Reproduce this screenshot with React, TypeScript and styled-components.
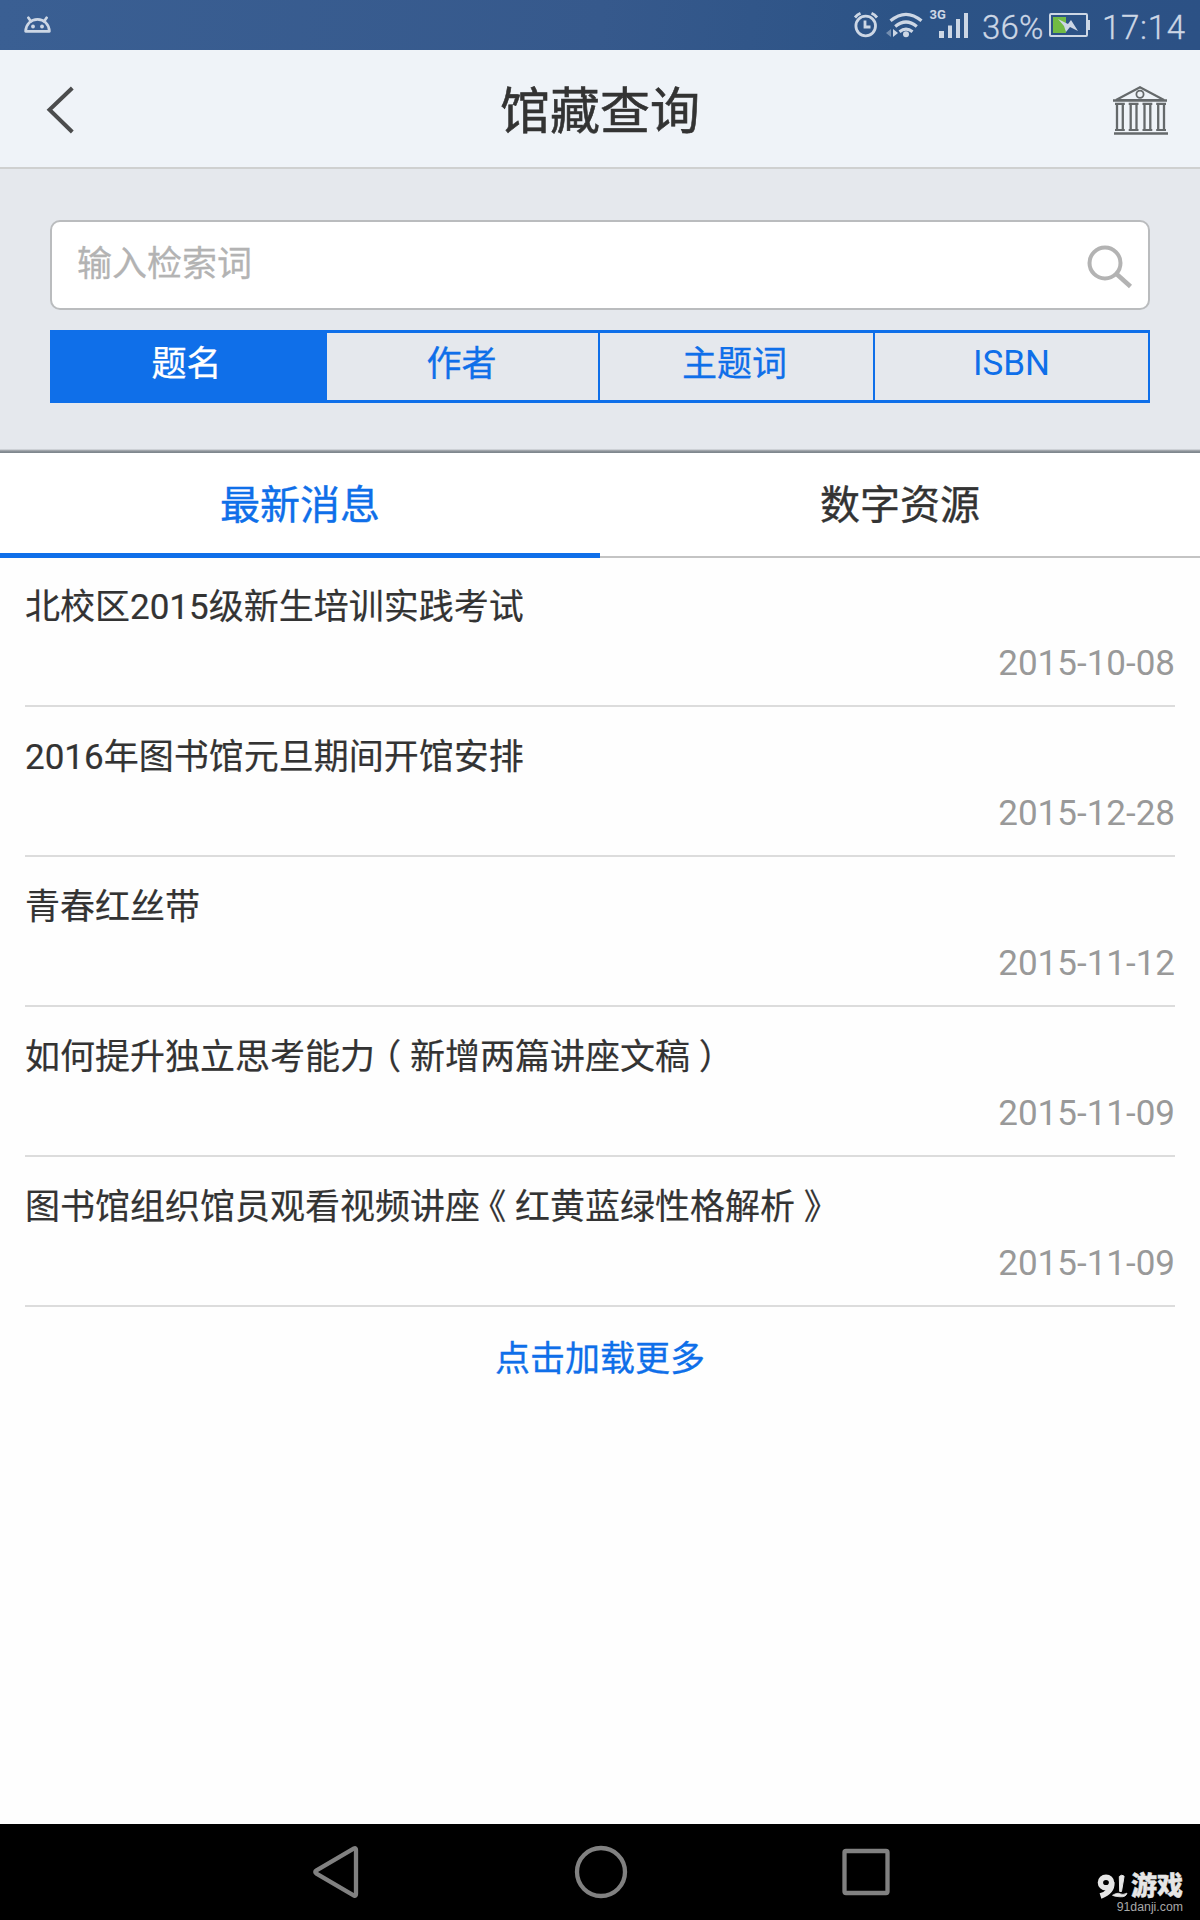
import React, { useState } from "react";
import styled, { createGlobalStyle } from "styled-components";

const BLUE = "#0f6fe9";

const GlobalStyle = createGlobalStyle`
  * { box-sizing: border-box; }
  body {
    margin: 0;
    background: #fefefe;
    font-family: Roboto, "Noto Sans CJK SC", sans-serif;
  }
  button { font: inherit; border: 0; padding: 0; margin: 0; background: none; cursor: pointer; }
`;

const Screen = styled.div`
  width: 1200px;
  height: 1920px;
  display: flex;
  flex-direction: column;
  overflow: hidden;
  color: #333;
`;

const StatusBar = styled.div`
  height: 50px;
  flex: none;
  display: flex;
  align-items: flex-start;
  padding: 0 14px 0 24px;
  background: linear-gradient(97deg, #3a5f93 0%, #36598c 50%, #2c5386 75%, #2c5185 100%);
  color: #cdd7e5;
`;

const StatusGroup = styled.div`
  margin-left: auto;
  display: flex;
`;

const StatusText = styled.span<{ $width: number; $left?: number; $spacing: number }>`
  width: ${(p) => p.$width}px;
  margin-left: ${(p) => p.$left ?? 0}px;
  padding-top: 2px;
  line-height: 52px;
  font-size: 33px;
  font-weight: 300;
  letter-spacing: ${(p) => p.$spacing}px;
  -webkit-text-stroke: 0.3px currentColor;
  white-space: nowrap;
`;

const Header = styled.header`
  height: 119px;
  flex: none;
  display: grid;
  grid-template-columns: 200px 1fr 200px;
  align-items: center;
  background: #eff3f8;
  border-bottom: 2px solid #cfd0d0;
`;

const Title = styled.h1`
  margin: 7px 0 0;
  text-align: center;
  font-size: 50px;
  line-height: 60px;
  font-weight: 400;
  -webkit-text-stroke: 0.6px currentColor;
`;

const HeaderButton = styled.button<{ $end?: boolean }>`
  display: flex;
  justify-content: ${(p) => (p.$end ? "flex-end" : "flex-start")};
  padding: ${(p) => (p.$end ? "1px 32px 0 0" : "0 0 0 46px")};
`;

const SearchPanel = styled.section`
  height: 284px;
  flex: none;
  padding: 51px 50px 0;
  background: linear-gradient(#e5e8ed 280px, #b5b9be 281px, #8e949a 282px, #7b838a 284px);
`;

const SearchBox = styled.label`
  height: 90px;
  display: flex;
  align-items: center;
  padding: 0 15px 2px 25px;
  border: 2px solid #babcbe;
  border-radius: 10px;
  background: #fff;
`;

const SearchInput = styled.input`
  flex: 1;
  min-width: 0;
  height: 60px;
  padding: 0;
  border: 0;
  outline: 0;
  background: none;
  font: inherit;
  font-size: 35px;
  color: #333;
  &::placeholder { color: #b3b3b3; opacity: 1; -webkit-text-stroke: 0.3px #b3b3b3; }
`;

const Segments = styled.div`
  margin-top: 20px;
  height: 73px;
  display: grid;
  grid-template-columns: 275px 275px 275px 275px;
  border: solid ${BLUE};
  border-width: 3px 0;
`;

const Segment = styled.button<{ $active: boolean; $latin: boolean }>`
  height: 67px;
  padding-bottom: ${(p) => (p.$latin ? 7 : 13)}px;
  border-right: 2px solid ${BLUE};
  font-size: 35px;
  color: ${(p) => (p.$active ? "#fff" : BLUE)};
  background: ${(p) => (p.$active ? BLUE : "none")};
  box-shadow: ${(p) => (p.$active ? `2px 0 ${BLUE}` : "none")};
  -webkit-text-stroke: ${(p) => (p.$latin ? 0 : 0.3)}px currentColor;
  &:nth-child(3) { padding-right: 4px; }
`;

const Tabs = styled.div`
  height: 105px;
  flex: none;
  display: grid;
  grid-template-columns: 1fr 1fr;
  background: #fff;
`;

const Tab = styled.button<{ $active: boolean }>`
  display: flex;
  justify-content: center;
  height: 105px;
  padding-top: 24px;
  line-height: 58px;
  font-size: 40px;
  color: ${(p) => (p.$active ? BLUE : "#333")};
  -webkit-text-stroke: 0.4px currentColor;
  box-shadow: inset 0 ${(p) => (p.$active ? `-5px ${BLUE}` : "-2px #c4c4c4")};
`;

const NewsList = styled.ul`
  flex: 1;
  margin: -1px 0 0;
  padding: 0 25px;
  list-style: none;
`;

const NewsItem = styled.li`
  height: 150px;
  padding-top: 23px;
  border-bottom: 2px solid #dcdcdc;
  display: flex;
  flex-direction: column;
  font-size: 35px;
  line-height: 56px;
`;

const NewsTitle = styled.span`
  white-space: nowrap;
  -webkit-text-stroke: 0.2px currentColor;
`;

const Bracket = styled.span`
  display: inline-block;
  width: 1em;
  text-align: center;
  font-feature-settings: "halt";
`;

const NewsDate = styled.time`
  align-self: flex-end;
  color: #999;
`;

const LoadMore = styled.button`
  display: block;
  width: 100%;
  padding-top: 25px;
  text-align: center;
  font-size: 35px;
  line-height: 56px;
  color: ${BLUE};
  -webkit-text-stroke: 0.3px currentColor;
`;

const NavBar = styled.nav`
  position: relative;
  height: 96px;
  flex: none;
  display: flex;
  justify-content: space-between;
  align-items: center;
  padding: 0 309px 0 313px;
  background: #000;
`;

const Watermark = styled.div`
  position: absolute;
  right: 17px;
  bottom: 6px;
  display: flex;
  flex-direction: column;
  align-items: flex-end;
  color: #e6e6e6;
`;

const WatermarkBrand = styled.div`
  display: flex;
  align-items: center;
  gap: 3px;
  font-size: 26px;
  line-height: 27px;
  font-weight: 900;
  -webkit-text-stroke: 0.4px currentColor;
`;

const WatermarkSite = styled.div`
  font-family: "Liberation Sans", sans-serif;
  font-size: 12.3px;
  line-height: 14px;
  color: #a8a8a8;
`;

const AndroidIcon = () => (
  <svg width="28" height="18" viewBox="0 0 28 18" style={{ marginTop: 16 }}>
    <g fill="none" stroke="currentColor" strokeWidth="2.7" strokeLinecap="round">
      <path d="M1.6 15.3C2 8 7 3.4 13.5 3.4S25 8 25.4 15.3Z" strokeLinejoin="round" />
      <path d="M4.4 1.8l2.4 3.4M22.6 1.8l-2.4 3.4" />
    </g>
    <circle cx="9" cy="10.5" r="1.9" fill="currentColor" />
    <circle cx="18" cy="10.5" r="1.9" fill="currentColor" />
  </svg>
);

const SignalIcons = () => (
  <svg width="130" height="50" viewBox="852 0 130 50">
    <g fill="none" stroke="currentColor">
      <circle cx="865.7" cy="26" r="9.8" strokeWidth="2.8" />
      <path d="M865 20.5v6.5h5.500" strokeWidth="2.8" />
      <path d="M855 17.5q2.4-2.9 5.5-4.2M877 17.5q-2.4-2.9-5.5-4.2" strokeWidth="2.8" />
      <path d="M890.5 20.8q15.5-13 31 0M895.2 26.5q10.8-9 21.6 0M899.5 31.7q6.5-5 13 0" strokeWidth="3.2" />
    </g>
    <circle cx="906" cy="34.3" r="3" fill="currentColor" />
    <path d="M891 29v8l-5-4z" fill="currentColor" opacity=".45" />
    <path d="M893 29v8l5-4z" fill="currentColor" />
    <text x="929.5" y="18.5" fontSize="13" fontWeight="700" fill="currentColor">3G</text>
    <path fill="currentColor" d="M939 31h5v7h-5zM948 25.5h4v12.500h-4zM956 19h4v19h-4zM964 13h4v25h-4z" />
  </svg>
);

const BatteryIcon = () => (
  <svg width="42" height="50" viewBox="1049 0 42 50">
    <rect x="1050" y="14" width="37" height="22" rx="1" fill="none" stroke="currentColor" strokeWidth="2" />
    <path d="M1088 20h2v10h-2z" fill="currentColor" />
    <path d="M1053 17h13v16h-13z" fill="#71bb44" />
    <path d="M1058 19l10 5 3-4 7 11-8-4-4 5-2-6z" fill="currentColor" />
  </svg>
);

const BackIcon = () => (
  <svg width="30" height="50" viewBox="0 0 30 50" style={{ marginTop: 2 }}>
    <path d="M26.3 3L3.5 24.8 26.3 47" fill="none" stroke="#4b4c4d" strokeWidth="4" />
  </svg>
);

const LibraryIcon = () => (
  <svg width="56" height="50" viewBox="0 0 56 50" style={{ marginTop: 1 }}>
    <g fill="none" stroke="#65696b">
      <path d="M4 15L28 2.3 52 15Z" strokeWidth="2.2" />
      <circle cx="28" cy="9.2" r="3.6" strokeWidth="1.8" />
      <path d="M2 48.5h54" strokeWidth="2.6" />
      <path d="M1 15.500h54" strokeWidth="2.4" />
      {[3, 16.7, 30.5, 44.2].map((x) => (
        <g key={x}>
          <path d={`M${x} 18.8h9.8M${x} 45h9.8`} strokeWidth="2.2" />
          <path d={`M${x + 2} 19v26M${x + 7.8} 19v26`} strokeWidth="2.3" />
        </g>
      ))}
    </g>
  </svg>
);

const SearchIcon = () => (
  <svg width="48" height="46" viewBox="0 0 48 46" style={{ marginTop: 4 }}>
    <circle cx="20" cy="20" r="15.5" fill="none" stroke="#b3b3b3" strokeWidth="4" />
    <path d="M31 30.5L45.5 43.5" stroke="#b3b3b3" strokeWidth="4.5" />
  </svg>
);

const NavBack = () => (
  <svg width="48" height="54" viewBox="0 0 48 54">
    <path d="M3.5 25.3L41 3.5q2-1 2 1.5V49q0 2.500-2 1.500L3.5 28.700q-2.500-1.700 0-3.400Z" fill="none" stroke="#818181" strokeWidth="4.300" />
  </svg>
);

const NavHome = () => (
  <svg width="54" height="54" viewBox="0 0 54 54">
    <circle cx="27" cy="27" r="24" fill="none" stroke="#818181" strokeWidth="4.300" />
  </svg>
);

const NavRecent = () => (
  <svg width="50" height="50" viewBox="0 0 50 50">
    <rect x="3.5" y="4" width="43" height="42" rx="1.5" fill="none" stroke="#818181" strokeWidth="4.300" />
  </svg>
);

const BrandMark = () => (
  <svg width="31" height="25" viewBox="0 0 31 25" fill="none" stroke="currentColor">
    <ellipse cx="9" cy="8.5" rx="5.600" ry="5.300" strokeWidth="5.400" />
    <path d="M14.800 8.500q0.500 9.500-11.300 13.500" strokeWidth="5.600" />
    <path d="M22.300 2.500q2.500-2.500 4.800-0.300L24.500 17.500h-1.800Z" fill="currentColor" strokeWidth="1" />
    <path d="M15.500 21.300q5-3 7.500-1.500t7-0.600q-1 4-7 3.600t-7.500-1.500Z" fill="currentColor" strokeWidth="0.800" />
  </svg>
);

const fields = ["题名", "作者", "主题词", "ISBN"];
const tabs = ["最新消息", "数字资源"];
const news = [
  { title: "北校区2015级新生培训实践考试", date: "2015-10-08" },
  { title: "2016年图书馆元旦期间开馆安排", date: "2015-12-28" },
  { title: "青春红丝带", date: "2015-11-12" },
  { title: "如何提升独立思考能力（新增两篇讲座文稿）", date: "2015-11-09" },
  { title: "图书馆组织馆员观看视频讲座《红黄蓝绿性格解析》", date: "2015-11-09" },
];

// Full-width brackets are centred in their cell.
const renderTitle = (title: string) =>
  title.split(/([（）《》])/).map((part, i) =>
    /^[（）《》]$/.test(part) ? <Bracket key={i}>{part}</Bracket> : part
  );

export default function App() {
  const [field, setField] = useState(0);
  const [tab, setTab] = useState(0);
  return (
    <>
      <GlobalStyle />
      <Screen>
        <StatusBar>
          <AndroidIcon />
          <StatusGroup>
            <SignalIcons />
            <StatusText $width={67} $spacing={0.2}>36%</StatusText>
            <BatteryIcon />
            <StatusText $width={84} $left={11} $spacing={0.7}>17:14</StatusText>
          </StatusGroup>
        </StatusBar>
        <Header>
          <HeaderButton aria-label="返回"><BackIcon /></HeaderButton>
          <Title>馆藏查询</Title>
          <HeaderButton $end aria-label="图书馆"><LibraryIcon /></HeaderButton>
        </Header>
        <SearchPanel>
          <SearchBox>
            <SearchInput placeholder="输入检索词" />
            <SearchIcon />
          </SearchBox>
          <Segments>
            {fields.map((f, i) => (
              <Segment key={f} $active={i === field} $latin={f === "ISBN"} onClick={() => setField(i)}>{f}</Segment>
            ))}
          </Segments>
        </SearchPanel>
        <Tabs>
          {tabs.map((t, i) => (
            <Tab key={t} $active={i === tab} onClick={() => setTab(i)}>{t}</Tab>
          ))}
        </Tabs>
        <NewsList>
          {news.map((n) => (
            <NewsItem key={n.title}>
              <NewsTitle>{renderTitle(n.title)}</NewsTitle>
              <NewsDate>{n.date}</NewsDate>
            </NewsItem>
          ))}
          <li><LoadMore>点击加载更多</LoadMore></li>
        </NewsList>
        <NavBar>
          <NavBack />
          <NavHome />
          <NavRecent />
          <Watermark>
            <WatermarkBrand><BrandMark />游戏</WatermarkBrand>
            <WatermarkSite>91danji.com</WatermarkSite>
          </Watermark>
        </NavBar>
      </Screen>
    </>
  );
}
